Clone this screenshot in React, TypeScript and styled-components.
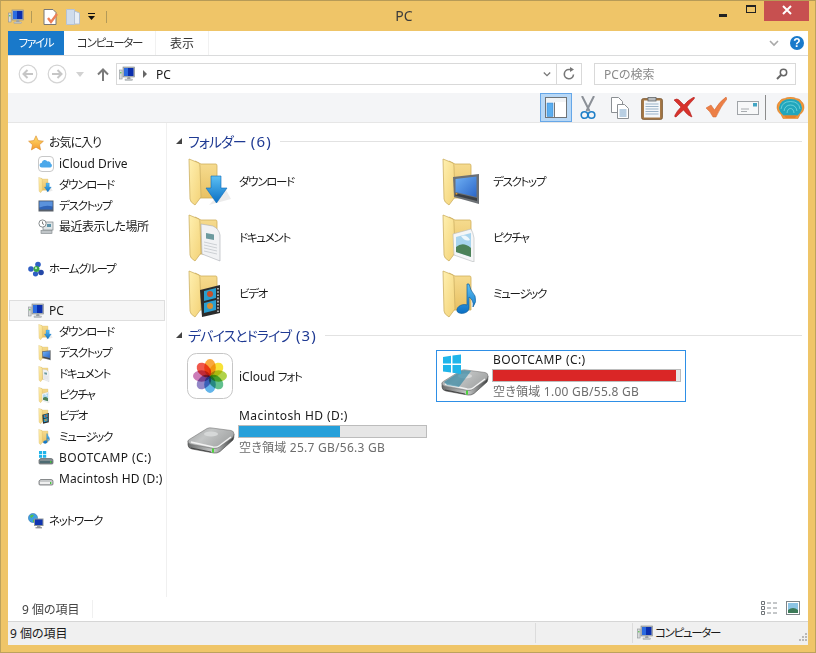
import styled, { createGlobalStyle } from 'styled-components';
import type { ReactNode } from 'react';

const GlobalStyle = createGlobalStyle`
	html, body {
		margin: 0;
		height: 100%;
		overflow: hidden;
	}
	body {
		font-family: 'Noto Sans', 'Noto Sans CJK JP', sans-serif;
		font-size: 12px;
		font-feature-settings: 'palt';
		color: #1a1a1a;
	}
	svg {
		display: block;
		flex-shrink: 0;
	}
`;

/* ---------- icons ---------- */

const PcIcon = ({ size = 16 }: { size?: number }) => (
	<svg width={size} height={size} viewBox='0 0 16 16'>
		<rect x='0.5' y='4' width='2.6' height='9' fill='#d8dadb' stroke='#8d9396' strokeWidth='0.6' />
		<rect x='1.2' y='6' width='1.2' height='1.4' fill='#53c04a' />
		<rect x='4' y='1' width='11.5' height='10' fill='#b4b9bc' stroke='#7f8589' strokeWidth='0.6' />
		<rect x='5' y='2' width='9.5' height='8' fill='#0b2fae' />
		<rect x='5' y='2' width='4' height='8' fill='#2c6be0' />
		<path d='M8.5 11h2.6l.5 2H8z' fill='#9ea3a6' />
		<rect x='6' y='13' width='7.5' height='1.4' fill='#c9cccf' stroke='#8d9396' strokeWidth='0.4' />
	</svg>
);

const FolderBase = () => (
	<>
		<defs>
			<linearGradient id='fBack' x1='0' y1='0' x2='0' y2='1'>
				<stop offset='0' stopColor='#f7dd92' />
				<stop offset='1' stopColor='#e8c163' />
			</linearGradient>
			<linearGradient id='fLeaf' x1='0' y1='0' x2='1' y2='1'>
				<stop offset='0' stopColor='#fff0b0' />
				<stop offset='1' stopColor='#f3d277' />
			</linearGradient>
			<linearGradient id='fBlue' x1='0' y1='0' x2='0' y2='1'>
				<stop offset='0' stopColor='#5cc0f4' />
				<stop offset='1' stopColor='#0a6fc4' />
			</linearGradient>
			<linearGradient id='fSky' x1='0' y1='0' x2='1' y2='1'>
				<stop offset='0' stopColor='#6fb0f4' />
				<stop offset='1' stopColor='#2b66c8' />
			</linearGradient>
		</defs>
		<path d='M8 3 L14 6 H29 Q30 6 30 8 V40 H10Z' fill='url(#fBack)' stroke='#cfae5c' strokeWidth='0.8' />
		<path d='M2 1 L12 5 Q13 6 13 9 L14 39 L8 47 Q3 44 3 41Z' fill='url(#fLeaf)' stroke='#cdb063' strokeWidth='0.8' />
	</>
);

type FolderKind = 'download' | 'document' | 'video' | 'desktop' | 'picture' | 'music';

const folderOverlays: Record<FolderKind, ReactNode> = {
	download: (
		<>
			<path d='M22 47 L44 41 L38 30 Z' fill='#000' opacity='0.08' />
			<path d='M24 18 H34 V30 H40 L29.5 45 L19 30 H24Z' fill='url(#fBlue)' stroke='#0b6ab8' strokeWidth='0.6' />
		</>
	),
	document: (
		<>
			<path d='M14 10 L26 12 Q32 15 33 21 V47 L15 40Z' fill='#f1f2f4' stroke='#a9adb3' strokeWidth='0.6' />
			<path d='M19 19 L27 20.5 V26 L19 24.5Z' fill='#6c9a9e' />
			<path d='M17 28 L30 31 M17 31 L30 34 M17 34 L30 37 M17 37 L30 40' stroke='#c3c6cc' strokeWidth='0.8' />
		</>
	),
	video: (
		<>
			<path d='M13 20 L33 15 V43 L15 47Z' fill='#2c2c2c' />
			<path d='M17 21 L29 18 V28 L17 31Z' fill='#2a9fd0' />
			<path d='M17 33 L29 30 V40 L17 43Z' fill='#2a9fd0' />
			<circle cx='23' cy='24' r='3' fill='#c8502a' />
			<circle cx='23' cy='36' r='3' fill='#d89030' />
			<path d='M31 18 V42' stroke='#cfcfcf' strokeWidth='1.6' strokeDasharray='1.6 1.6' />
		</>
	),
	desktop: (
		<>
			<path d='M12 19 L38 16 V46 L13 39Z' fill='#6c7074' />
			<path d='M14.5 21 L35.5 18.5 V39 L14.5 34Z' fill='url(#fSky)' />
			<path d='M14 35 L36 40 V43 L14 37.5Z' fill='#3b3f44' />
			<rect x='14.5' y='35' width='1.8' height='1.6' fill='#e09a30' />
		</>
	),
	picture: (
		<>
			<path d='M12 20 L30 15 Q32 18 33 24 V48 L13 41Z' fill='#f5f6f7' stroke='#b5b8bb' strokeWidth='0.6' />
			<path d='M15 23 L30 19 V43 L15 38Z' fill='#a8d4ee' />
			<path d='M15 33 Q22 27 30 34 V43 L15 38Z' fill='#4c8258' />
			<path d='M20 22 Q26 20 29 26 Q24 28 20 22Z' fill='#fff' opacity='0.8' />
		</>
	),
	music: (
		<>
			<path d='M26 14 L28 14 Q29 20 34 26 Q36 32 32 37 Q33 30 28 27 V38 C28 43 20 45 16.5 42 C14 38 20 33 26 35Z' fill='url(#fBlue)' stroke='#0f5f9f' strokeWidth='0.7' />
		</>
	),
};

const FolderIcon = ({ kind, size = 48 }: { kind: FolderKind; size?: number }) => (
	<svg width={size} height={size} viewBox='0 0 48 48'>
		<FolderBase />
		{folderOverlays[kind]}
	</svg>
);

const DiskShape = () => (
	<>
		<defs>
			<linearGradient id='dTop' x1='0' y1='0' x2='1' y2='0.5'>
				<stop offset='0' stopColor='#9c9e9f' />
				<stop offset='0.45' stopColor='#c4c6c6' />
				<stop offset='1' stopColor='#a2a4a4' />
			</linearGradient>
			<linearGradient id='dFront' x1='0' y1='0' x2='1' y2='0'>
				<stop offset='0' stopColor='#6a6c6c' />
				<stop offset='0.55' stopColor='#c9cbcb' />
				<stop offset='1' stopColor='#3c3e3e' />
			</linearGradient>
		</defs>
		<path d='M1 15 V19 Q1 22 5 23 L27 27 Q30 27.5 33 25.5 L46 14 Q47 12 47 8Z' fill='url(#dFront)' stroke='#444' strokeWidth='0.6' />
		<path d='M1 15 Q1 14 3 13 L20 2.5 Q22 1.5 25 2 L44 4.5 Q47 5 47 8 Q47 10 45 12 L32 21 Q30 23 26 22.5 L5 18.5 Q1 18 1 15Z' fill='url(#dTop)' stroke='#777' strokeWidth='0.6' />
		<path d='M4 16 L26 21 Q30 21.5 32 20 L44 11' fill='none' stroke='#f2f2f2' strokeWidth='1.4' />
		<ellipse cx='24' cy='8' rx='7' ry='2.6' fill='#d6d8d8' />
		<rect x='25' y='22.5' width='2' height='4.2' fill='#4fd33f' />
		<path d='M4 22 L24 26' stroke='#2a2a2a' strokeWidth='1' opacity='0.7' />
	</>
);

const DriveIcon = () => (
	<svg width='48' height='28' viewBox='0 0 48 28'>
		<DiskShape />
	</svg>
);

const WinDriveIcon = () => (
	<svg width='48' height='42' viewBox='0 0 48 42'>
		<g transform='translate(0 14)'>
			<DiskShape />
			<path d='M3 14 L20 3 Q22 2 26 2.5 L30 3 L18 19 L6 17Z' fill='#1f7f9e' opacity='0.6' />
		</g>
		<path d='M2 3 L10 1.8 V9.5 H2Z M11.5 1.6 L20 .5 V9.5 H11.5Z M2 11 H10 V18.5 L2 17.5Z M11.5 11 H20 V20 L11.5 18.8Z' fill='#1fb5ea' />
	</svg>
);

const SmallDrive = ({ win }: { win?: boolean }) => (
	<svg width='16' height='16' viewBox='0 0 16 16'>
		{win && (
			<path d='M1 1 H4.2 V4 H1Z M5 1 H8.2 V4 H5Z M1 4.8 H4.2 V7.8 H1Z M5 4.8 H8.2 V7.8 H5Z' fill='#1fb5ea' />
		)}
		<path d='M1 10 Q2 8.5 3 8.5 H13 Q15 8.5 15 10.5 V13 Q15 14 14 14 H2 Q1 14 1 13Z' fill={win ? '#7f8c90' : '#c8cacb'} stroke='#5f6365' strokeWidth='0.7' />
		<rect x='2' y='11' width='12' height='2' fill={win ? '#4d6a72' : '#f0f0f0'} />
		<rect x='12' y='11' width='1.4' height='2' fill='#49c23f' />
	</svg>
);

const StarIcon = () => (
	<svg width='16' height='16' viewBox='0 0 16 16'>
		<defs>
			<linearGradient id='star' x1='0' y1='0' x2='0' y2='1'>
				<stop offset='0' stopColor='#ffdf70' />
				<stop offset='1' stopColor='#f59a2c' />
			</linearGradient>
		</defs>
		<path d='M8 .8l2.2 4.8 5.2.6-3.9 3.5 1.1 5.2L8 12.2l-4.6 2.7 1.1-5.2L.6 6.2l5.2-.6z' fill='url(#star)' stroke='#d98a2e' strokeWidth='0.6' />
	</svg>
);

const CloudIcon = () => (
	<svg width='16' height='16' viewBox='0 0 16 16'>
		<rect x='.5' y='.5' width='15' height='15' rx='3.5' fill='#fff' stroke='#c8c8c8' />
		<path d='M4 11.5a2.4 2.4 0 0 1-.2-4.8 3 3 0 0 1 5.6-1.2 2.6 2.6 0 0 1 3.4 2.2 2 2 0 0 1-.6 3.8z' fill='#4ba8ea' />
	</svg>
);

const MonitorIcon = () => (
	<svg width='16' height='16' viewBox='0 0 16 16'>
		<rect x='.5' y='2.5' width='15' height='11' fill='#59606a' />
		<rect x='1.5' y='3.5' width='13' height='8' fill='#2f64b8' />
		<path d='M1.5 3.5h13v5q-6-2-13 1z' fill='#5a92dc' />
	</svg>
);

const RecentIcon = () => (
	<svg width='16' height='16' viewBox='0 0 16 16'>
		<rect x='5' y='3' width='10' height='8' fill='#dfe4e6' stroke='#7d8488' strokeWidth='0.7' />
		<rect x='9' y='5' width='4' height='3' fill='#5d93a8' />
		<rect x='3' y='11.5' width='11' height='3' fill='#c0c5c8' stroke='#7d8488' strokeWidth='0.6' />
		<circle cx='4.5' cy='4.5' r='3.6' fill='#fff' stroke='#6c7275' strokeWidth='0.8' />
		<path d='M4.5 2.5v2.2l1.5.8' stroke='#444' strokeWidth='0.7' fill='none' />
	</svg>
);

const HomeGroupIcon = () => (
	<svg width='16' height='16' viewBox='0 0 16 16'>
		<circle cx='10' cy='3.5' r='2.8' fill='#2f5fc4' />
		<circle cx='3' cy='8' r='2.8' fill='#2f5fc4' />
		<circle cx='13' cy='11.5' r='2.8' fill='#2448a8' />
		<circle cx='7.5' cy='12.8' r='2.6' fill='#2f5fc4' />
		<circle cx='8.5' cy='8' r='3' fill='#38a848' />
		<circle cx='8' cy='7.2' r='1.1' fill='#bfeac0' />
	</svg>
);

const NetworkIcon = () => (
	<svg width='16' height='16' viewBox='0 0 16 16'>
		<circle cx='5' cy='5' r='4.6' fill='#3e9fe0' stroke='#2a6fa8' strokeWidth='0.5' />
		<path d='M2 3q2-2 4-1-1 2-3 3zM5 7q3-1 3 1-1 2-3 1z' fill='#55c04a' />
		<rect x='6' y='5.5' width='9.5' height='7.5' fill='#8d9498' />
		<rect x='7' y='6.5' width='7.5' height='5.5' fill='#0f34b0' />
		<rect x='9' y='13' width='3.5' height='1.5' fill='#9a9fa3' />
		<rect x='7.5' y='14.3' width='6.5' height='1' fill='#777' />
	</svg>
);

const Petal = styled.ellipse`
	mix-blend-mode: multiply;
`;

const PhotosIcon = () => {
	const petals = ['#f9a83c', '#f8e238', '#b0d24a', '#62c08e', '#62b4ea', '#9488c8', '#cc7cb8', '#f0584c'];
	return (
		<svg width='46' height='46' viewBox='0 0 46 46'>
			<rect x='.5' y='.5' width='45' height='45' rx='9' fill='#fff' stroke='#c6c6c6' />
			{petals.map((c, i) => (
				<Petal
					key={c}
					cx='23'
					cy='14.5'
					rx='5.8'
					ry='8.5'
					fill={c}
					transform={`rotate(${i * 45} 23 23)`}
				/>
			))}
		</svg>
	);
};

const BackIcon = ({ flip }: { flip?: boolean }) => (
	<svg width='20' height='20' viewBox='0 0 20 20'>
		<circle cx='10' cy='10' r='8.8' fill='#fff' stroke='#d4d4d4' strokeWidth='1.2' />
		<path
			d={flip ? 'M5 10h9M10.5 6l4 4-4 4' : 'M15 10H6M9.5 6l-4 4 4 4'}
			fill='none'
			stroke='#c6c6c6'
			strokeWidth='2'
		/>
	</svg>
);

const ChevronDown = ({ color = '#777', w = 10 }: { color?: string; w?: number }) => (
	<svg width={w} height='7' viewBox='0 0 10 7'>
		<path d='M1 1l4 4 4-4' fill='none' stroke={color} strokeWidth='1.6' />
	</svg>
);

/* ---------- toolbar icons ---------- */

const LayoutIcon = () => (
	<svg width='22' height='21' viewBox='0 0 22 21'>
		<rect x='.5' y='.5' width='21' height='20' fill='#fff' stroke='#6f7478' />
		<rect x='1' y='1' width='20' height='4' fill='#f2f4f6' />
		<rect x='2' y='6' width='6' height='13.5' fill='#5aaef0' stroke='#3f88cc' strokeWidth='0.6' />
		<path d='M9.5 5.5V20.5' stroke='#777' />
	</svg>
);

const ScissorsIcon = () => (
	<svg width='16' height='24' viewBox='0 0 16 24'>
		<path d='M2 0 L9.5 15 M14 0 L6.5 15' stroke='#8b9097' strokeWidth='2' />
		<circle cx='4.5' cy='19' r='3.3' fill='none' stroke='#1f7fc8' strokeWidth='1.6' />
		<circle cx='11.5' cy='19' r='3.3' fill='none' stroke='#1f7fc8' strokeWidth='1.6' />
	</svg>
);

const CopyIcon = () => (
	<svg width='18' height='22' viewBox='0 0 18 22'>
		<path d='M.5.5h7l4 4v11H.5z' fill='#fff' stroke='#8b8f93' />
		<path d='M6.5 7.5h7l4 4v10h-11z' fill='#fff' stroke='#8b8f93' />
		<path d='M8.5 13h7M8.5 15h7M8.5 17h7M8.5 19h7' stroke='#4f86b8' strokeWidth='0.8' />
	</svg>
);

const ClipboardIcon = () => (
	<svg width='22' height='24' viewBox='0 0 22 24'>
		<rect x='.7' y='2.7' width='20.6' height='20.6' rx='1.5' fill='#a87a48' stroke='#7d5a34' />
		<rect x='3' y='4.5' width='16' height='17' fill='#f4f7fa' />
		<path d='M4.5 8h13M4.5 10.5h13M4.5 13h13M4.5 15.5h13M4.5 18h13' stroke='#9bb3c8' />
		<rect x='7' y='1.5' width='8' height='3.5' fill='#b9bdc0' stroke='#62666a' strokeWidth='0.8' />
	</svg>
);

const DeleteIcon = () => (
	<svg width='22' height='21' viewBox='0 0 22 21'>
		<path d='M1 3 Q4 1 6 3 L11 8 Q15 3 21 0 Q22 1 21 2 Q17 6 14 10 Q17 14 19 20 Q15 19 10.5 13 Q6 17 3 20 Q1 20 2 18 Q4 14 8 10 Q4 6 1 3Z' fill='#d8322c' stroke='#b0221e' strokeWidth='0.6' />
	</svg>
);

const CheckIcon = () => (
	<svg width='22' height='21' viewBox='0 0 22 21'>
		<path d='M1 11 L6 8 L9.5 13 Q14 5 21 0 L22 2 Q16 9 11 20 H8 Q5 14 1 11Z' fill='#ec7f46' stroke='#d0652e' strokeWidth='0.5' />
	</svg>
);

const MailIcon = () => (
	<svg width='22' height='14' viewBox='0 0 22 14'>
		<rect x='.5' y='.5' width='21' height='13' fill='#f7f8f9' stroke='#a0a4a8' />
		<rect x='16' y='2' width='4' height='3.5' fill='#42a5c4' />
		<path d='M4 8h8M4 10.5h6' stroke='#a8acb0' />
	</svg>
);

const ShellIcon = () => (
	<svg width='29' height='22' viewBox='0 0 29 22'>
		<path d='M14.5 0 Q18 0 20 1.5 Q24 1.5 25.5 4.5 Q28.5 7 28 11 Q27.5 15 24 17.5 L22 21.5 H7 L5 17.5 Q1.5 15 1 11 Q.5 7 3.5 4.5 Q5 1.5 9 1.5 Q11 0 14.5 0Z' fill='#f0953a' stroke='#d67a20' strokeWidth='0.5' />
		<path d='M14.5 2 Q25 2 26 11 Q25.5 15 21.5 18.5 H7.5 Q3.5 15 3 11 Q4 2 14.5 2Z' fill='#22a6bc' />
		<path d='M5 12 Q6 4.5 14.5 4.5 Q23 4.5 24 12 M8 14 Q9 8 14.5 8 Q20 8 21 14 M11 16 Q11.5 11.5 14.5 11.5 Q17.5 11.5 18 16' fill='none' stroke='#9ceef0' strokeWidth='1' opacity='0.55' />
		<path d='M8 18.5 H21 L19 21 H10Z' fill='#e5812a' />
	</svg>
);

/* ---------- layout ---------- */

const Win = styled.div`
	display: flex;
	flex-direction: column;
	box-sizing: border-box;
	height: 100vh;
	background: #efc568;
	border: 1px solid #bda25c;
	border-top-color: #b79b57;
`;

const TitleBar = styled.div`
	position: relative;
	display: flex;
	align-items: center;
	height: 30px;
	flex-shrink: 0;
	padding-left: 7px;
`;

const QuickBar = styled.div`
	display: flex;
	align-items: center;
	gap: 7px;
	margin-top: 1px;
`;

const QuickSep = styled.span<{ $ml?: number; $mr?: number }>`
	width: 1px;
	height: 12px;
	background: #b39a58;
	margin: 0 ${(p) => p.$mr ?? 0}px 0 ${(p) => p.$ml ?? 0}px;
`;

const Title = styled.div`
	position: absolute;
	left: 0;
	right: 8px;
	top: 6px;
	text-align: center;
	font-size: 14px;
	line-height: 18px;
	color: #3b3b3b;
`;

const WinButtons = styled.div`
	display: flex;
	align-items: flex-start;
	margin-left: auto;
	align-self: flex-start;
	margin-right: 6px;
`;

const WinBtn = styled.div<{ $w: number }>`
	display: flex;
	align-items: center;
	justify-content: center;
	width: ${(p) => p.$w}px;
	height: 20px;
`;

const CloseBtn = styled(WinBtn)`
	background: #c75050;
`;

const MinGlyph = styled.span`
	width: 8px;
	height: 3px;
	margin: 8px 4px 0 0;
	background: #222;
`;

const MaxGlyph = styled.span`
	box-sizing: border-box;
	width: 10px;
	height: 8px;
	margin-bottom: 4px;
	border: 1px solid #222;
	border-top-width: 2px;
`;

const CloseGlyph = styled.svg`
	margin-bottom: 2px;
`;

const Inner = styled.div`
	flex: 1;
	min-height: 0;
	display: flex;
	flex-direction: column;
	margin: 0 7px 7px;
	background: #fff;
`;

const Tabs = styled.div`
	display: flex;
	align-items: stretch;
	height: 25px;
	flex-shrink: 0;
	padding-right: 4px;
	border-bottom: 1px solid #dadbdc;
	box-sizing: border-box;
`;

const FileTab = styled.div`
	display: flex;
	align-items: center;
	justify-content: center;
	width: 56px;
	background: #1979ca;
	color: #fff;
`;

const Tab = styled.div<{ $w: number }>`
	display: flex;
	align-items: center;
	justify-content: center;
	width: ${(p) => p.$w}px;
	border-right: 1px solid #f1f1f1;
	color: #333;
`;

const TabEnd = styled.div`
	display: flex;
	align-items: center;
	gap: 11px;
	margin-left: auto;
	color: #a9a9a9;
`;

const Help = styled.div`
	display: flex;
	align-items: center;
	justify-content: center;
	width: 14px;
	height: 14px;
	border-radius: 50%;
	background: #1979ca;
	color: #fff;
	font-family: 'Liberation Sans', sans-serif;
	font-size: 12px;
	font-weight: 700;
`;

const NavBar = styled.div`
	display: flex;
	align-items: center;
	box-sizing: border-box;
	height: 37px;
	flex-shrink: 0;
	padding: 0 12px 1px 10px;
`;

const NavButtons = styled.div`
	display: flex;
	align-items: center;
	gap: 9px;
	width: 98px;
`;

const Arrow = styled.svg`
	margin-left: 4px;
`;

const Address = styled.div`
	display: flex;
	align-items: center;
	box-sizing: border-box;
	width: 466px;
	height: 22px;
	padding-left: 2px;
	border: 1px solid #d9d9d9;
	color: #1a1a1a;
`;

const CrumbArrow = styled.span`
	width: 0;
	height: 0;
	margin: 0 9px 0 8px;
	border-left: 4px solid #666;
	border-top: 4px solid transparent;
	border-bottom: 4px solid transparent;
`;

const AddressEnd = styled.div`
	display: flex;
	align-items: center;
	margin-left: auto;
	height: 100%;
`;

const Refresh = styled.div`
	display: flex;
	align-items: center;
	justify-content: center;
	width: 24px;
	height: 100%;
	margin-left: 5px;
	border-left: 1px solid #d9d9d9;
`;

const Search = styled.div`
	display: flex;
	align-items: center;
	justify-content: space-between;
	box-sizing: border-box;
	width: 202px;
	height: 22px;
	margin-left: 12px;
	padding: 0 7px 0 9px;
	border: 1px solid #d9d9d9;
	color: #8a8a8a;
`;

const Toolbar = styled.div`
	display: flex;
	align-items: center;
	justify-content: flex-end;
	height: 30px;
	box-sizing: border-box;
	flex-shrink: 0;
	background: #f4f5f7;
	border-bottom: 1px solid #e6e6e6;
`;

const ToolBtn = styled.div<{ $active?: boolean; $w?: number }>`
	display: flex;
	align-items: center;
	justify-content: center;
	box-sizing: border-box;
	width: ${(p) => p.$w ?? 32}px;
	height: 29px;
	background: ${(p) => (p.$active ? '#b8d8f6' : 'transparent')};
	border: 1px solid ${(p) => (p.$active ? '#66a7e8' : 'transparent')};
`;

const ToolSep = styled.span`
	width: 1px;
	height: 25px;
	margin: 0 6px 0 1px;
	background: #8c8c8c;
`;

const Body = styled.div`
	flex: 1;
	min-height: 0;
	display: flex;
`;

const Sidebar = styled.nav`
	box-sizing: content-box;
	width: 158px;
	padding-top: 9px;
	border-right: 1px solid #f0f0f0;
	overflow: hidden;
`;

const SideRow = styled.div<{ $indent: number; $selected?: boolean }>`
	display: flex;
	align-items: center;
	gap: 5px;
	box-sizing: border-box;
	height: 21px;
	margin: 0 1px;
	padding-left: ${(p) => p.$indent - 2}px;
	white-space: nowrap;
	overflow: hidden;
	background: ${(p) => (p.$selected ? '#f6f6f6' : 'transparent')};
	border: 1px solid ${(p) => (p.$selected ? '#dedede' : 'transparent')};
`;

const SideGap = styled.div`
	height: 21px;
`;

const Label = styled.span<{ $size?: number; $sp?: number }>`
	font-size: ${(p) => p.$size ?? 11.5}px;
	letter-spacing: ${(p) => p.$sp ?? -1.3}px;
	margin-bottom: 2px;
`;

const HeadLabel = styled.span`
	font-size: 14px;
	letter-spacing: -0.9px;
`;

const Latin = styled.span<{ $sp: number }>`
	letter-spacing: ${(p) => p.$sp}px;
`;

const Main = styled.main`
	flex: 1;
	min-width: 0;
	padding: 7px 6px 0 9px;
`;

const SectionHead = styled.div`
	display: flex;
	align-items: center;
	gap: 6px;
	height: 22px;
	color: #1f3a93;
	font-size: 15px;
	white-space: nowrap;
`;

const HeadCount = styled.span`
	margin-left: -1px;
	letter-spacing: 1.2px;
`;

const Caret = styled.span`
	width: 0;
	height: 0;
	border-left: 6px solid transparent;
	border-bottom: 6px solid #444;
`;

const HeadLine = styled.span`
	flex: 1;
	height: 1px;
	margin-left: 2px;
	background: #e2e2e2;
`;

const Grid = styled.div<{ $rowGap: number; $mt: number; $mb: number }>`
	display: grid;
	grid-template-columns: 254px 254px;
	row-gap: ${(p) => p.$rowGap}px;
	padding-left: 6px;
	margin-top: ${(p) => p.$mt}px;
	margin-bottom: ${(p) => p.$mb}px;
`;

const FolderTile = styled.div`
	display: flex;
	align-items: center;
	gap: 4px;
	height: 56px;
	padding-left: 5px;
`;

const DriveTile = styled.div<{ $selected?: boolean }>`
	display: flex;
	align-items: center;
	box-sizing: border-box;
	width: 250px;
	height: 52px;
	padding-left: 4px;
	border: 1px solid ${(p) => (p.$selected ? '#2e8fe6' : 'transparent')};
`;

const DriveIconBox = styled.div<{ $pb: number }>`
	display: flex;
	align-items: flex-end;
	justify-content: center;
	box-sizing: border-box;
	width: 48px;
	height: 50px;
	padding-bottom: ${(p) => p.$pb}px;
`;

const DriveInfo = styled.div`
	display: flex;
	flex-direction: column;
	margin-left: 3px;
`;

const DriveName = styled.div`
	padding-left: 1px;
	line-height: 18px;
	letter-spacing: 0.42px;
`;

const Bar = styled.div`
	box-sizing: border-box;
	width: 189px;
	height: 13px;
	background: #e6e6e6;
	border: 1px solid #bcbcbc;
`;

const BarFill = styled.div<{ $low: boolean }>`
	height: 100%;
	background: ${(p) => (p.$low ? '#da2626' : '#26a0da')};
`;

const Free = styled.div`
	margin-top: 1px;
	padding-left: 1px;
	line-height: 18px;
	letter-spacing: 0.25px;
	color: #6d6d6d;
`;

const PhotoTile = styled(FolderTile)`
	height: 52px;
	padding-left: 5px;
	gap: 6px;
`;

const ViewRow = styled.div`
	display: flex;
	align-items: center;
	height: 24px;
	flex-shrink: 0;
	padding: 0 8px 0 14px;
	color: #444;
`;

const ViewCount = styled.span`
	padding-right: 12px;
	border-right: 1px solid #f0f0f0;
`;

const ViewIcons = styled.div`
	display: flex;
	align-items: center;
	gap: 9px;
	margin-left: auto;
	margin-bottom: 2px;
`;

const StatusBar = styled.div`
	display: flex;
	align-items: stretch;
	height: 24px;
	flex-shrink: 0;
	background: #f0f0f0;
	border-top: 1px solid #d6d6d6;
	box-sizing: border-box;
`;

const StatusCell = styled.div<{ $w?: number }>`
	display: flex;
	align-items: center;
	gap: 2px;
	box-sizing: border-box;
	width: ${(p) => (p.$w ? `${p.$w}px` : 'auto')};
	flex: ${(p) => (p.$w ? 'none' : 1)};
	padding-left: ${(p) => (p.$w === 528 ? 2 : 4)}px;
	border-right: 1px solid ${(p) => (p.$w ? '#dcdcdc' : 'transparent')};
	margin: 1px 0 2px;
`;

const Grip = styled.svg`
	align-self: flex-end;
	margin: 0 0 2px auto;
`;

/* ---------- data ---------- */

const folders: { kind: FolderKind; label: string }[] = [
	{ kind: 'download', label: 'ダウンロード' },
	{ kind: 'desktop', label: 'デスクトップ' },
	{ kind: 'document', label: 'ドキュメント' },
	{ kind: 'picture', label: 'ピクチャ' },
	{ kind: 'video', label: 'ビデオ' },
	{ kind: 'music', label: 'ミュージック' },
];

const pcFolders: { kind: FolderKind; label: string }[] = [
	{ kind: 'download', label: 'ダウンロード' },
	{ kind: 'desktop', label: 'デスクトップ' },
	{ kind: 'document', label: 'ドキュメント' },
	{ kind: 'picture', label: 'ピクチャ' },
	{ kind: 'video', label: 'ビデオ' },
	{ kind: 'music', label: 'ミュージック' },
];

const App = () => {
	return (
		<>
			<GlobalStyle />
			<Win>
				<TitleBar>
					<QuickBar>
						<PcIcon />
						<QuickSep $mr={4} />
						<svg width='16' height='16' viewBox='0 0 16 16'>
							<path d='M1 .5h9l3 3v12H1z' fill='#fff' stroke='#777' />
							<path d='M5 9l3 4 6-8' fill='none' stroke='#ec8058' strokeWidth='2.4' />
						</svg>
						<svg width='14' height='16' viewBox='0 0 14 16'>
							<path d='M.5.5h8v15h-8z' fill='#cfdcec' stroke='#b4c2d4' />
							<path d='M8.5 2l5 2v11h-5z' fill='#e8eef5' stroke='#b4c2d4' />
						</svg>
						<svg width='9' height='8' viewBox='0 0 9 8'>
							<path d='M1 .5h7' stroke='#111' />
							<path d='M1 3h7L4.5 7z' fill='#111' />
						</svg>
						<QuickSep $ml={3} />
					</QuickBar>
					<Title>PC</Title>
					<WinButtons>
						<WinBtn $w={26}>
							<MinGlyph />
						</WinBtn>
						<WinBtn $w={26}>
							<MaxGlyph />
						</WinBtn>
						<CloseBtn $w={45}>
							<CloseGlyph width='10' height='10' viewBox='0 0 10 10'>
								<path d='M1 1l8 8M9 1l-8 8' stroke='#fff' strokeWidth='2' />
							</CloseGlyph>
						</CloseBtn>
					</WinButtons>
				</TitleBar>
				<Inner>
					<Tabs>
						<FileTab><Label>ファイル</Label></FileTab>
						<Tab $w={91}><Label>コンピューター</Label></Tab>
						<Tab $w={52}>表示</Tab>
						<TabEnd>
							<ChevronDown color='#a9a9a9' />
							<Help>?</Help>
						</TabEnd>
					</Tabs>
					<NavBar>
						<NavButtons>
							<BackIcon />
							<BackIcon flip />
							<svg width='8' height='5' viewBox='0 0 8 5'>
								<path d='M0 0h8L4 5z' fill='#d2d2d2' />
							</svg>
							<Arrow width='12' height='13' viewBox='0 0 12 13'>
								<path d='M6 13V2M1 6.5L6 1.5l5 5' fill='none' stroke='#7a7a7a' strokeWidth='2' />
							</Arrow>
						</NavButtons>
						<Address>
							<PcIcon />
							<CrumbArrow />
							PC
							<AddressEnd>
								<ChevronDown w={8} />
								<Refresh>
									<svg width='14' height='14' viewBox='0 0 14 14'>
										<path d='M11.5 7.5A4.6 4.6 0 1 1 7 2.5h2' fill='none' stroke='#777' strokeWidth='1.6' />
										<path d='M8 0l4 2.6L8 5z' fill='#777' />
									</svg>
								</Refresh>
							</AddressEnd>
						</Address>
						<Search>
							PCの検索
							<svg width='12' height='12' viewBox='0 0 12 12'>
								<circle cx='7.5' cy='4.5' r='3.2' fill='none' stroke='#666' strokeWidth='1.5' />
								<path d='M5 7L1 11' stroke='#666' strokeWidth='2' />
							</svg>
						</Search>
					</NavBar>
					<Toolbar>
						<ToolBtn $active><LayoutIcon /></ToolBtn>
						<ToolBtn><ScissorsIcon /></ToolBtn>
						<ToolBtn><CopyIcon /></ToolBtn>
						<ToolBtn><ClipboardIcon /></ToolBtn>
						<ToolBtn><DeleteIcon /></ToolBtn>
						<ToolBtn><CheckIcon /></ToolBtn>
						<ToolBtn><MailIcon /></ToolBtn>
						<ToolSep />
						<ToolBtn $w={36}><ShellIcon /></ToolBtn>
					</Toolbar>
					<Body>
						<Sidebar>
							<SideRow $indent={20}><StarIcon /><Label $size={12} $sp={-1}>お気に入り</Label></SideRow>
							<SideRow $indent={30}><CloudIcon />iCloud Drive</SideRow>
							<SideRow $indent={30}><FolderIcon kind='download' size={16} /><Label>ダウンロード</Label></SideRow>
							<SideRow $indent={30}><MonitorIcon /><Label>デスクトップ</Label></SideRow>
							<SideRow $indent={30}><RecentIcon /><Label $size={12} $sp={-0.5}>最近表示した場所</Label></SideRow>
							<SideGap />
							<SideRow $indent={20}><HomeGroupIcon /><Label>ホームグループ</Label></SideRow>
							<SideGap />
							<SideRow $indent={20} $selected><PcIcon />PC</SideRow>
							{pcFolders.map((f) => (
								<SideRow key={f.label} $indent={30}>
									<FolderIcon kind={f.kind} size={16} />
									<Label>{f.label}</Label>
								</SideRow>
							))}
							<SideRow $indent={30}><SmallDrive win /><Latin $sp={0.42}>BOOTCAMP (C:)</Latin></SideRow>
							<SideRow $indent={30}><SmallDrive /><Latin $sp={0.1}>Macintosh HD (D:)</Latin></SideRow>
							<SideGap />
							<SideRow $indent={20}><NetworkIcon /><Label>ネットワーク</Label></SideRow>
						</Sidebar>
						<Main>
							<SectionHead>
								<Caret />
								<HeadLabel>フォルダー</HeadLabel>
								<HeadCount>(6)</HeadCount>
								<HeadLine />
							</SectionHead>
							<Grid $rowGap={0} $mt={2} $mb={2}>
								{folders.map((f) => (
									<FolderTile key={f.label}>
										<FolderIcon kind={f.kind} />
										<Label>{f.label}</Label>
									</FolderTile>
								))}
							</Grid>
							<SectionHead>
								<Caret />
								<HeadLabel>デバイスとドライブ</HeadLabel>
								<HeadCount>(3)</HeadCount>
								<HeadLine />
							</SectionHead>
							<Grid $rowGap={4} $mt={4} $mb={0}>
								<PhotoTile>
									<PhotosIcon />
									<span>iCloud <Label>フォト</Label></span>
								</PhotoTile>
								<DriveTile $selected>
									<DriveIconBox $pb={5}><WinDriveIcon /></DriveIconBox>
									<DriveInfo>
										<DriveName>BOOTCAMP (C:)</DriveName>
										<Bar><BarFill $low style={{ width: '98%' }} /></Bar>
										<Free>空き領域 1.00 GB/55.8 GB</Free>
									</DriveInfo>
								</DriveTile>
								<DriveTile>
									<DriveIconBox $pb={3}><DriveIcon /></DriveIconBox>
									<DriveInfo>
										<DriveName>Macintosh HD (D:)</DriveName>
										<Bar><BarFill $low={false} style={{ width: '54%' }} /></Bar>
										<Free>空き領域 25.7 GB/56.3 GB</Free>
									</DriveInfo>
								</DriveTile>
							</Grid>
						</Main>
					</Body>
					<ViewRow>
						<ViewCount>9 個の項目</ViewCount>
						<ViewIcons>
							<svg width='16' height='14' viewBox='0 0 16 14'>
								<path d='M.5.5h3v3h-3zM.5 5.5h3v3h-3zM.5 10.5h3v3h-3z' fill='#fff' stroke='#6f7478' />
								<path d='M6 2h4M12 2h4M6 7h4M12 7h4M6 12h4M12 12h4' stroke='#8a8f93' />
							</svg>
							<svg width='14' height='14' viewBox='0 0 14 14'>
								<rect x='.5' y='.5' width='13' height='13' fill='#fff' stroke='#7d8488' />
								<rect x='2' y='2' width='10' height='10' fill='#8cc4e4' />
								<path d='M2 9q5-4 10 0v3H2z' fill='#3c7a58' />
							</svg>
						</ViewIcons>
					</ViewRow>
					<StatusBar>
						<StatusCell $w={528}>9 個の項目</StatusCell>
						<StatusCell $w={97} />
						<StatusCell>
							<PcIcon />
							<Label>コンピューター</Label>
							<Grip width='8' height='8' viewBox='0 0 8 8'>
								<path d='M6 0h2v2H6zM3 3h2v2H3zM6 3h2v2H6zM0 6h2v2H0zM3 6h2v2H3zM6 6h2v2H6z' fill='#b8b8b8' />
							</Grip>
						</StatusCell>
					</StatusBar>
				</Inner>
			</Win>
		</>
	);
};

export default App;
